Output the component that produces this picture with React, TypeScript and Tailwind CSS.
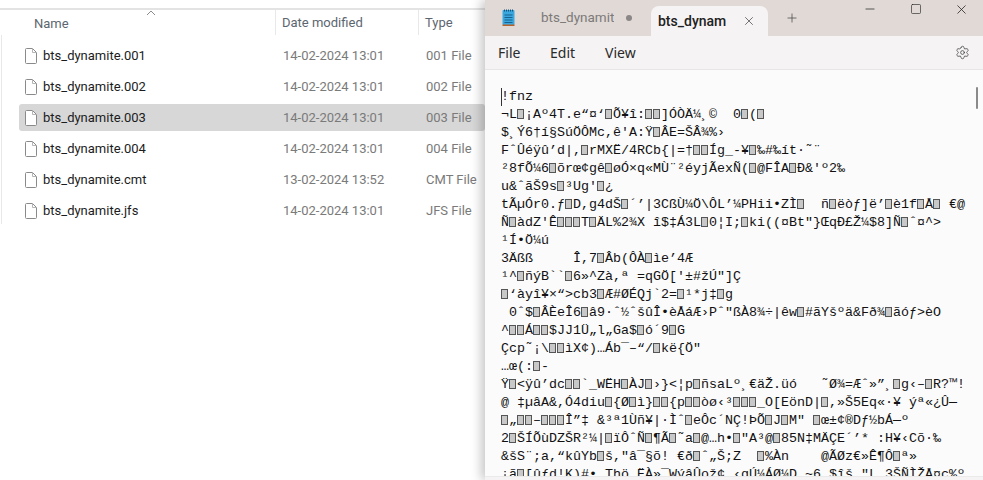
import { Minus, Plus, Settings, Square, X } from "lucide-react";

const files = [
  { name: "bts_dynamite.001", date: "14-02-2024 13:01", type: "001 File" },
  { name: "bts_dynamite.002", date: "14-02-2024 13:01", type: "002 File" },
  { name: "bts_dynamite.003", date: "14-02-2024 13:01", type: "003 File", selected: true },
  { name: "bts_dynamite.004", date: "14-02-2024 13:01", type: "004 File" },
  { name: "bts_dynamite.cmt", date: "13-02-2024 13:52", type: "CMT File" },
  { name: "bts_dynamite.jfs", date: "14-02-2024 13:01", type: "JFS File" },
];

const lines = [
  "!fnz",
  "¬L▯¡Aº4T.e“¤‘▯Õ¥î:▯▯]ÓÒÄ¼¸©  0▯(▯",
  "$¸Ý6†í§SúÖÔMc,ê'A:Ÿ▯ÂE=ŠÂ¾%›",
  "FˆÛéÿû’d|,▯rMXË/4RCb{|=†▯▯Íg_-¥▯‰#‰ít·˜¨",
  "²8fÕ¼6▯õrœ¢gê▯øÓ×q«MÙ¨²éyjÃexÑ(▯@FÎA▯Ð&'º2‰",
  "u&ˆãŠ9s▯³Ug'▯¿",
  "tÃµÓr0.ƒ▯D,g4dŠ▯´’|3CßÙ¼Ö\\ÔL’¼PHii•ZÌ▯  ñ▯ëòƒ]ë’▯è1f▯Å▯ €@",
  "Ñ▯àdZ'Ê▯▯▯T▯ÄL%2¾X î$‡Á3L▯0¦I;▯ki((¤Bt\"}ŒqÐ£Ž¼$8]Ñ▯ˆ¤^>",
  "¹Í•Ö¼ú",
  "3Äßß     Î,7▯Âb(ÔÀ▯ìe’4Æ",
  "¹^▯ñýB``▯6»^Zà,ª =qGÖ['±#žÚ\"]Ç",
  "▯‘àyî¥×“>cb3▯Æ#ØÉQj`2=▯¹*j‡▯g",
  " 0ˆ$▯ÂÈeÎ6▯â9·ˆ½ˆšûÎ•èÅáÆ›Pˆ\"ßÀ8¾÷|êw▯#ãYšºä&Fð¾▯ãóƒ>èO",
  "^▯▯Á▯▯$JJ1Ü„l„Ga$▯ó´9▯G",
  "Çcp˜¡\\▯▯ìX¢)…Áb¯–“/▯kë{Ö\"",
  "…œ(:▯-",
  "Ÿ▯<ÿû’dc▯▯`_WËH▯ÀJ▯›}<¦p▯ñsaLº¸€äŽ.üó   ˜Ø¾=Æˆ»”¸▯g‹–▯R?™!",
  "@ ‡µâA&,Ó4diu▯{Ø▯ì}▯▯{p▯▯òø‹³▯▯▯_O[EönD|▯,»Š5Eq«·¥ ýª«¿Û—",
  "▯„▯▯–▯▯▯Î”‡ &³ª1Ùñ¥|·Ìˆ▯eÔc´NÇ!ÞÕ▯J▯M\" ▯œ±¢®Dƒ½bÁ—º",
  "2▯ŠÍÕùDZŠR²¼|▯ïÔˆÑ▯¶Ã▯˜a▯@…h•▯\"A³@▯85N‡MÄÇE´’* :H¥‹Cõ·‰",
  "&šS¨;a,“kûYb▯š,\"â¯§õ! €ð▯ˆ„Š;Z  ▯%Àn    @ÃØz€»Ê¶Ô▯ª»",
  "¡ã▯[ûƒd!K)#• Thö ËÀ»¯WýâÛož¢ ‹qÚ¼ÁØ¼D ~6 $îš \"L 3ŠÑÌŽÅ¤ç%º",
];

function FileIcon() {
  return (
    <svg width="12" height="16" viewBox="0 0 12 16" fill="none" className="shrink-0">
      <path d="M1.5 .5h6l4 4v10a1 1 0 0 1-1 1h-9a1 1 0 0 1-1-1v-13a1 1 0 0 1 1-1Z" fill="#fff" stroke="#8a8a8a" />
      <path d="M7.5 .5v4h4" stroke="#b5b5b5" />
    </svg>
  );
}

function NotepadIcon() {
  return (
    <svg width="13" height="17" viewBox="0 0 13 17">
      <rect x="0.5" y="1" width="12" height="15" rx="1" fill="#3aa8de" />
      <rect x="0.5" y="15.5" width="12" height="1.5" fill="#b4622c" />
      <path d="M2.5 6h8M2.5 8.5h8M2.5 11h8M2.5 13.5h8" stroke="#17608f" strokeWidth="1" />
      <path d="M2 1.5h9" stroke="#14527c" strokeWidth="2" strokeDasharray="1 1" />
    </svg>
  );
}

// unknown bytes show as a filled tofu box one cell wide
function EditorLine({ text }: { text: string }) {
  const parts = text.split("▯");
  return (
    <div className="h-[18px] whitespace-pre">
      {parts.map((part, i) => (
        <span key={i}>
          {i > 0 && <span className="mr-[1px] inline-block h-[10px] w-[7px] border border-[#555] bg-[#c8c8c8] align-[-1px]" />}
          {part}
        </span>
      ))}
    </div>
  );
}

function Explorer() {
  return (
    <div className="w-[485px] shrink-0 bg-white pt-2 font-['Roboto',sans-serif]">
      <div className="relative flex h-[27px] border-t-2 border-[#e3e3e3] text-[13px] text-[#5c6670]">
        <svg width="10" height="6" viewBox="0 0 10 6" fill="none" className="absolute left-[146px] top-0">
          <path d="M1 5 5 1l4 4" stroke="#8c8c8c" />
        </svg>
        <span className="w-[275px] pl-[34px] pt-[4px]">Name</span>
        <span className="w-[143px] border-l border-[#e8e8e8] pl-[6px] pt-[3px]">Date modified</span>
        <span className="border-l border-[#e8e8e8] pl-[6px] pt-[3px]">Type</span>
      </div>
      <div className="ml-[1px] flex flex-col gap-[4px] border-l border-[#e8e8e8] pt-[7px]">
        {files.map((file) => (
          <div
            key={file.name}
            className={`ml-[17px] flex h-[27px] items-center rounded-[3px] pt-[1px] text-[13px] ${file.selected ? "bg-[#d7d7d7]" : ""}`}
          >
            <span className="ml-[6px] flex w-[258px] items-center gap-[6px] text-[#1c1c1c]">
              <FileIcon />
              {file.name}
            </span>
            <span className="w-[143px] text-[13px] text-[#7a7a7a]">{file.date}</span>
            <span className="text-[13px] text-[#7a7a7a]">{file.type}</span>
          </div>
        ))}
      </div>
    </div>
  );
}

function Notepad() {
  return (
    <div className="relative flex h-[480px] w-[498px] flex-col overflow-hidden bg-[#fbfbfb] font-['Noto_Sans',sans-serif] shadow-[-4px_0_10px_rgba(0,0,0,0.22)]">
      <div className="flex h-[36px] shrink-0 bg-[#e0d9d6] font-['Roboto',sans-serif]">
        <div className="flex w-[56px] items-center pb-[2px] pl-[17px]">
          <NotepadIcon />
        </div>
        <div className="flex w-[110px] items-center pb-[1px] text-[13.5px] text-[#7d7a79]">
          <span className="w-[73px] overflow-hidden whitespace-nowrap">bts_dynamite</span>
          <span className="ml-[12px] size-[6px] rounded-full bg-[#8a8786]" />
        </div>
        <div className="mt-[6px] flex h-[30px] w-[117px] items-center rounded-t-[8px] bg-[#f5f3f3] pl-[7px] text-[14px] font-medium text-[#222]">
          <span className="w-[70px] overflow-hidden whitespace-nowrap">bts_dynam</span>
          <X size={14} strokeWidth={1.25} className="ml-[14px] text-[#444]" />
        </div>
        <div className="flex w-[48px] items-center justify-center pb-[1px]">
          <Plus size={14} strokeWidth={1.25} className="text-[#444]" />
        </div>
        <div className="ml-auto flex items-start pt-[2px] text-[#222]">
          <span className="flex h-[14px] w-[45px] items-center justify-center">
            <Minus size={14} strokeWidth={1.25} />
          </span>
          <span className="flex h-[14px] w-[47px] items-center justify-center">
            <Square size={12} strokeWidth={1.25} />
          </span>
          <span className="flex h-[14px] w-[44px] items-center justify-center">
            <X size={15} strokeWidth={1.25} />
          </span>
        </div>
      </div>
      <div className="flex h-[34px] shrink-0 items-center border-b border-[#e8e6e5] bg-[#f5f3f3] pl-[13px] text-[14px] text-[#2a2a2a]">
        <span className="w-[52px]">File</span>
        <span className="w-[55px]">Edit</span>
        <span>View</span>
        <Settings size={15} strokeWidth={1.25} className="ml-auto mr-[13px] text-[#444]" />
      </div>
      <div className="relative flex-1 overflow-hidden pl-[16px] pt-[18px] font-['Liberation_Mono','DejaVu_Sans_Mono',monospace] text-[13.33px] leading-[18px] text-[#111]">
        {lines.map((line, i) => (
          <EditorLine key={i} text={line} />
        ))}
        <div className="absolute left-[16px] top-[18px] h-[18px] w-px bg-[#333]" />
        <div className="absolute right-[5px] top-[17px] h-[22px] w-[2px] rounded-full bg-[#8a8a8a]" />
      </div>
      <div className="h-[4px] shrink-0 border-t border-[#eaeaea] bg-[#f5f3f3]" />
    </div>
  );
}

export default function App() {
  return (
    <div className="flex h-[480px] w-[983px] overflow-hidden bg-white">
      <Explorer />
      <Notepad />
    </div>
  );
}
